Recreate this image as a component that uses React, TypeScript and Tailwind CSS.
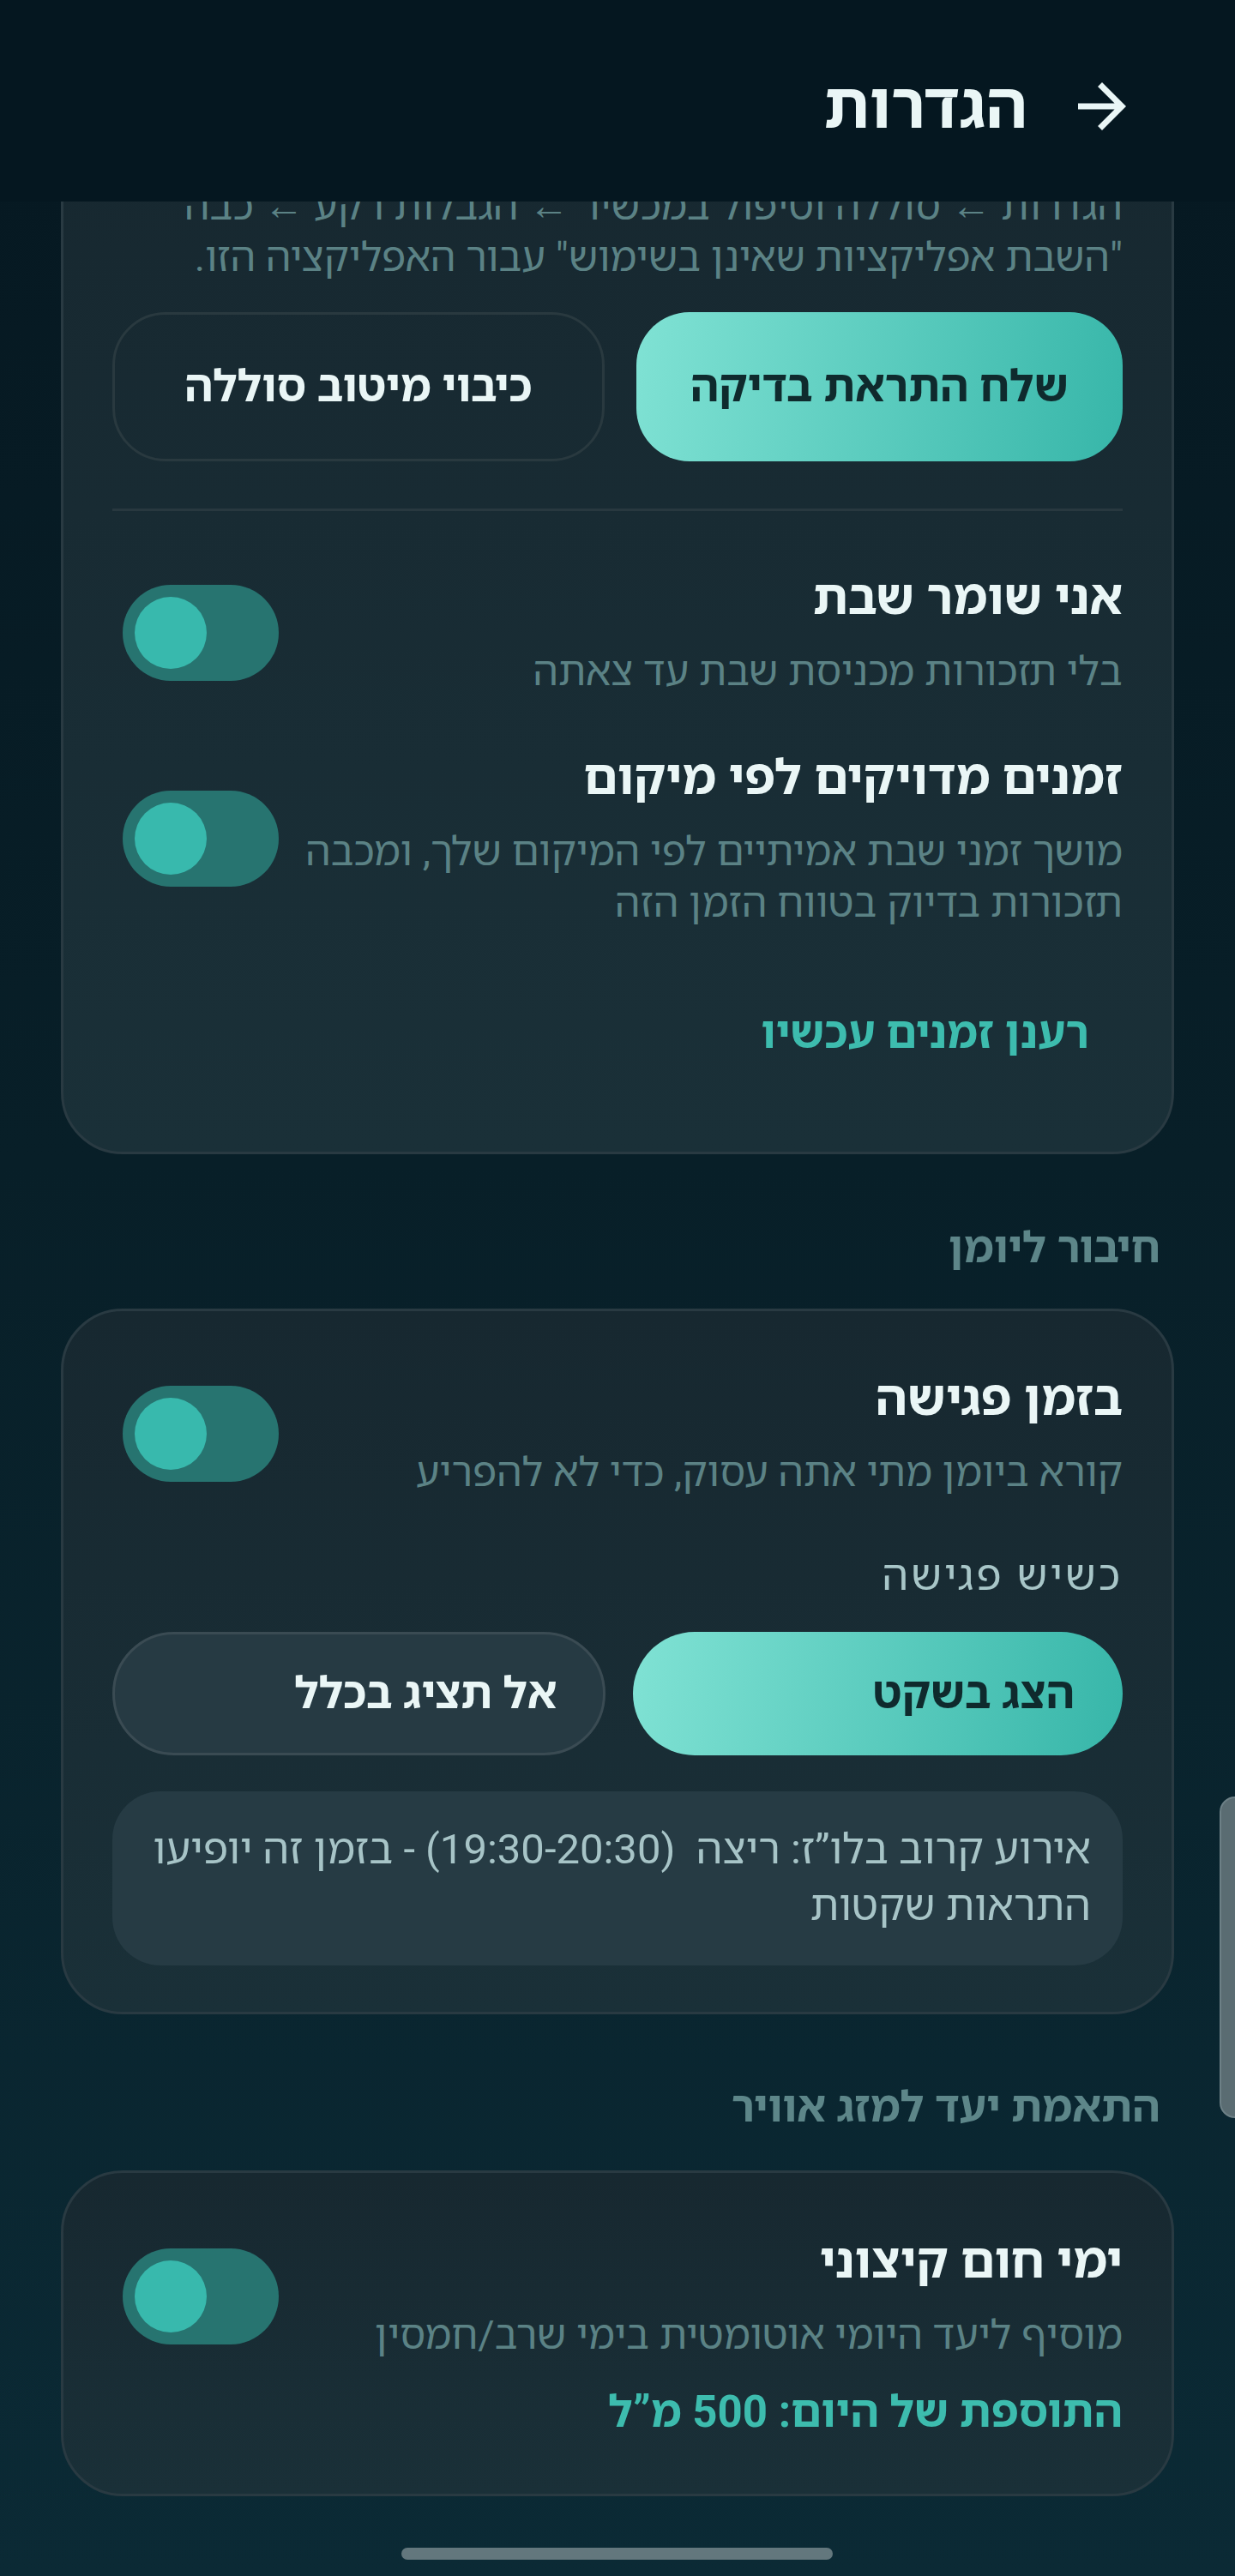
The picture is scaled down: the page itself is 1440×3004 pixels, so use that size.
import React from 'react';

const FONT = "font-['Roboto','Noto_Sans_Hebrew','Open_Sans',sans-serif]";

function Toggle() {
    return (
        <div dir="ltr" className="ml-[12px] flex h-[112px] w-[182px] shrink-0 items-center rounded-full bg-[#277470] pl-[14px]">
            <div className="h-[84px] w-[84px] rounded-full bg-[#38b9ad]" />
        </div>
    );
}

function SettingRow({ title, children, className = '' }: { title: string; children: React.ReactNode; className?: string }) {
    return (
        <div className={`flex items-center gap-[20px] ${className}`}>
            <div className="min-w-0 flex-1">
                <h3 className="text-[57px] font-bold leading-[68px] text-[#eaf6f6]">{title}</h3>
                <p className="mt-[22px] whitespace-nowrap text-[47px] leading-[60px] text-[#5b8285]">{children}</p>
            </div>
            <Toggle />
        </div>
    );
}

function SectionLabel({ children }: { children: React.ReactNode }) {
    return <h2 className="pr-[16px] text-[50px] font-bold leading-[64px] text-[#5d8689]">{children}</h2>;
}

const CARD = 'rounded-[72px] border-[3px] border-[#293a42] bg-[linear-gradient(180deg,#172830,#1a3038)] px-[57px]';

export default function App() {
    return (
        <div dir="rtl" className={`relative h-[3004px] w-[1440px] overflow-hidden bg-[linear-gradient(180deg,#061821_0%,#081f28_45%,#0b2a35_100%)] ${FONT}`}>
            {/* Top bar */}
            <header className="relative z-10 flex h-[235px] items-start gap-[45px] bg-[#051720] pr-[113px] pt-[82px]">
                <svg viewBox="0 0 24 24" className="h-[84px] w-[84px] shrink-0" fill="#eaf6f6">
                    <path transform="translate(24 0) scale(-1 1)" d="M20 11H7.83l5.59-5.59L12 4l-8 8 8 8 1.41-1.41L7.83 13H20v-2z" />
                </svg>
                <h1 className="text-[74px] font-bold leading-[84px] text-[#eaf6f6]">הגדרות</h1>
            </header>

            <main className="h-[2769px] overflow-hidden px-[71px]">
                {/* Notifications card (scrolled) */}
                <section className={`${CARD} -mt-[96px] pb-[90px] pt-[68px]`}>
                    <p className="whitespace-nowrap text-[47px] leading-[60px] text-[#5b8285]">
                        הגדרות ← סוללה וטיפול במכשיר ← הגבלות רקע ← כבה
                        <br />
                        "השבת אפליקציות שאינן בשימוש" עבור האפליקציה הזו.
                    </p>
                    <div className="mt-[34px] flex h-[174px] gap-[37px]">
                        <button className="flex-1 rounded-[62px] bg-[linear-gradient(100deg,#80e2d4,#37b6a9)] text-[51px] font-bold text-[#0f2a2d]">
                            שלח התראת בדיקה
                        </button>
                        <button className="flex-1 rounded-[62px] border-[3px] border-[#29393f] text-[51px] font-bold text-[#eaf6f6]">
                            כיבוי מיטוב סוללה
                        </button>
                    </div>
                    <div className="mt-[55px] h-[3px] bg-[#28383f]" />
                    <SettingRow title="אני שומר שבת" className="mt-[67px]">
                        בלי תזכורות מכניסת שבת עד צאתה
                    </SettingRow>
                    <SettingRow title="זמנים מדויקים לפי מיקום" className="mt-[60px]">
                        מושך זמני שבת אמיתיים לפי המיקום שלך, ומכבה
                        <br />
                        תזכורות בדיוק בטווח הזמן הזה
                    </SettingRow>
                    <button className="mt-[74px] flex h-[96px] items-center pr-[39px] text-[51px] font-bold text-[#3dbcae]">
                        רענן זמנים עכשיו
                    </button>
                </section>

                <div className="mt-[77px]">
                    <SectionLabel>חיבור ליומן</SectionLabel>
                </div>

                {/* Calendar card */}
                <section className={`${CARD} mt-[39px] pb-[54px] pt-[68px]`}>
                    <SettingRow title="בזמן פגישה">קורא ביומן מתי אתה עסוק, כדי לא להפריע</SettingRow>
                    <p className="mt-[61px] text-[49px] leading-[60px] tracking-[3px] text-[#a8c6c8]">כשיש פגישה</p>
                    <div className="mt-[35px] flex h-[144px] gap-[32px]">
                        <button className="flex flex-1 items-center rounded-full bg-[linear-gradient(100deg,#80e2d4,#37b6a9)] pr-[56px] text-[51px] font-bold text-[#0f2a2d]">
                            הצג בשקט
                        </button>
                        <button className="flex flex-1 items-center rounded-full border-[3px] border-[#3a4b53] bg-[#263a43] pr-[53px] text-[51px] font-bold text-[#eaf6f6]">
                            אל תציג בכלל
                        </button>
                    </div>
                    <div className="mt-[42px] rounded-[56px] bg-[#263b44] pb-[36px] pl-[30px] pr-[37px] pt-[35px]">
                        <p className="whitespace-pre text-[49px] leading-[66px] text-[#a7c4c7]">
                            {'אירוע קרוב בלו”ז: ריצה  (19:30-20:30) - בזמן זה יופיעו'}
                            <br />
                            התראות שקטות
                        </p>
                    </div>
                </section>

                <div className="mt-[76px]">
                    <SectionLabel>התאמת יעד למזג אוויר</SectionLabel>
                </div>

                {/* Weather card */}
                <section className={`${CARD} mt-[42px] pb-[61px] pt-[69px]`}>
                    <SettingRow title="ימי חום קיצוני">מוסיף ליעד היומי אוטומטית בימי שרב/חמסין</SettingRow>
                    <p className="mt-[26px] text-[51px] font-bold leading-[68px] text-[#3dbcae]">התוספת של היום: 500 מ”ל</p>
                </section>
            </main>

            {/* Fast-scroll thumb overlay */}
            <div className="absolute left-[1422px] top-[2095px] h-[375px] w-[40px] rounded-[18px] border-[2px] border-[#6d8086] bg-[#5a6c72]" />
            {/* Gesture bar */}
            <div className="absolute left-[468px] top-[2971px] h-[14px] w-[503px] rounded-full bg-[#63777d]" />
        </div>
    );
}
